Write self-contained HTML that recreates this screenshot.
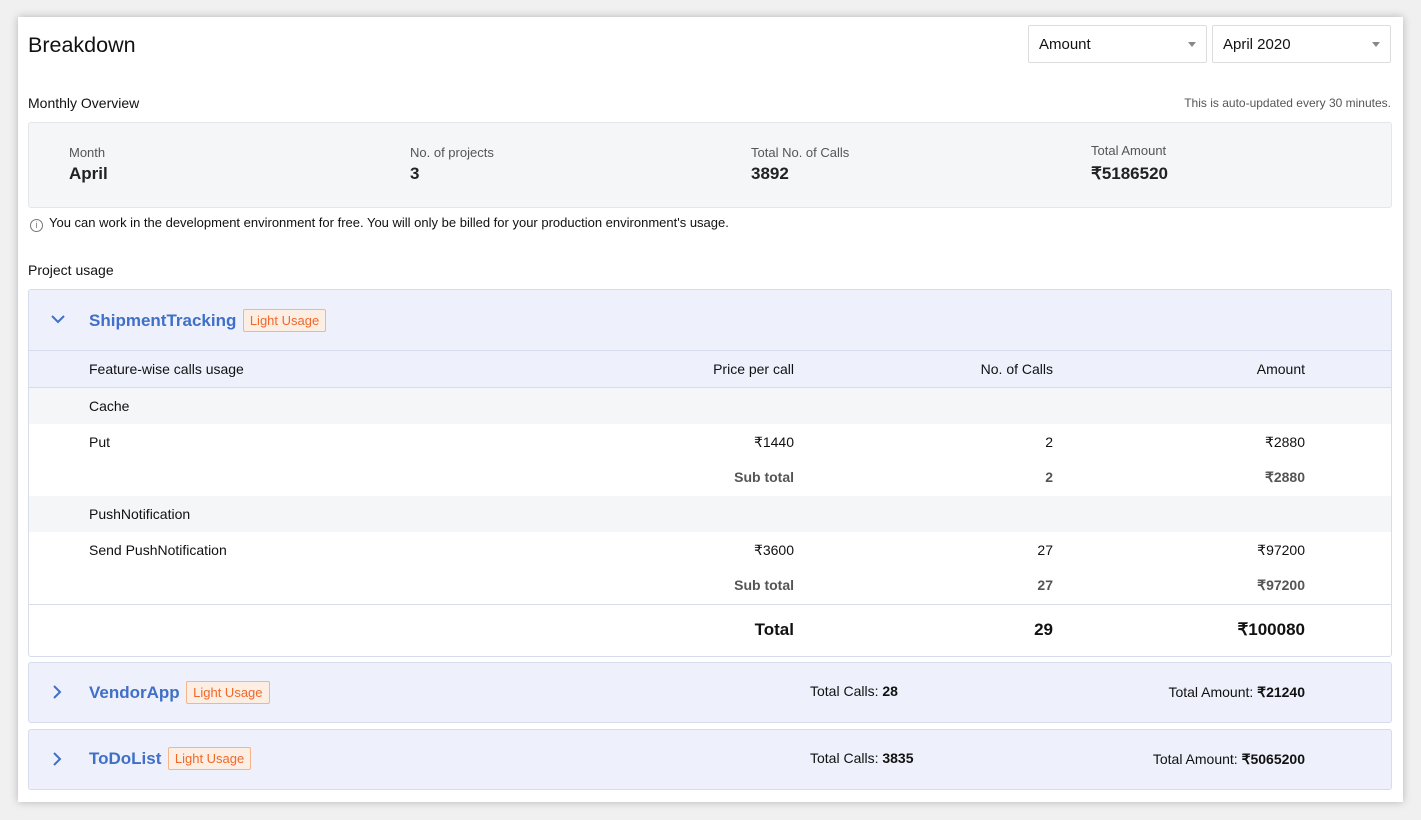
<!DOCTYPE html>
<html><head><meta charset="utf-8"><style>
*{box-sizing:border-box;margin:0;padding:0}
body{width:1421px;height:820px;background:#f0f0f0;font-family:"Liberation Sans",sans-serif;color:#111;position:relative;overflow:hidden}
.card{position:absolute;left:18px;top:17px;width:1385px;height:785px;background:#fff;box-shadow:0 0 8px rgba(0,0,0,.25)}
.a{position:absolute;white-space:nowrap}
.sel{position:absolute;top:25px;height:38px;border:1px solid #ddd;border-radius:2px;background:#fff;font-size:15px;padding:10px 10px}
.sel:after{content:"";position:absolute;right:10px;top:16px;border:4px solid transparent;border-top:5px solid #888}
.ov{position:absolute;left:28px;top:122px;width:1364px;height:86px;background:#f5f6f8;border:1px solid #e3e6ea;border-radius:3px}
.lab{font-size:13px;color:#555}
.val{font-size:17px;font-weight:bold;color:#222}
.proj{position:absolute;left:28px;width:1364px;border:1px solid #d7dcec;border-radius:3px;background:#fff;overflow:hidden}
.row{position:absolute;left:0;width:100%;font-size:14px}
.blue{color:#3f6fc8;font-size:17px;font-weight:bold}
.badge{display:inline-block;border:1px solid #f5b48a;background:#fdeee4;color:#f0682a;font-size:13px;padding:3px 6px;border-radius:2px;vertical-align:1px}
.r{text-align:right}
</style></head><body>
<div class="card"></div>
<div class="a" style="left:28px;top:33px;font-size:21.5px">Breakdown</div>
<div class="sel" style="left:1028px;width:179px">Amount</div>
<div class="sel" style="left:1212px;width:179px">April 2020</div>
<div class="a" style="left:28px;top:95px;font-size:14px">Monthly Overview</div>
<div class="a" style="right:30px;top:96px;font-size:12px;color:#555">This is auto-updated every 30 minutes.</div>
<div class="ov"></div>
<div class="a lab" style="left:69px;top:145px">Month</div><div class="a val" style="left:69px;top:164px">April</div>
<div class="a lab" style="left:410px;top:145px">No. of projects</div><div class="a val" style="left:410px;top:164px">3</div>
<div class="a lab" style="left:751px;top:145px">Total No. of Calls</div><div class="a val" style="left:751px;top:164px">3892</div>
<div class="a lab" style="left:1091px;top:143px">Total Amount</div><div class="a val" style="left:1091px;top:164px">₹5186520</div>
<div class="a" style="left:30px;top:215px;font-size:13px"><span style="display:inline-block;width:13px;height:13px;border:1px solid #777;border-radius:50%;font-size:9px;text-align:center;line-height:11px;color:#777;margin-right:6px;vertical-align:-1px">i</span>You can work in the development environment for free. You will only be billed for your production environment's usage.</div>
<div class="a" style="left:28px;top:262px;font-size:14px">Project usage</div>

<div class="proj" style="top:289px;height:368px">
 <div class="row" style="top:0;height:61px;background:#eef1fb;border-bottom:1px solid #d7dcec"></div>
 <div class="row" style="top:61px;height:37px;background:#eef1fb;border-bottom:1px solid #d7dcec"></div>
 <div class="row" style="top:98px;height:36px;background:#f5f6f8"></div>
 <div class="row" style="top:206px;height:36px;background:#f5f6f8"></div>
 <div class="row" style="top:314px;height:1px;background:#d7dcec"></div>
</div>
<svg class="a" style="left:51px;top:314px" width="14" height="10"><path d="M1 2l6 6 6-6" stroke="#3f6fc8" stroke-width="2" fill="none"/></svg>
<div class="a" style="left:89px;top:309px"><span class="blue">ShipmentTracking</span> <span class="badge" style="margin-left:2px">Light Usage</span></div>
<div class="a" style="left:89px;top:361px;font-size:14px">Feature-wise calls usage</div>
<div class="a r" style="right:627px;top:361px;font-size:14px">Price per call</div>
<div class="a r" style="right:368px;top:361px;font-size:14px">No. of Calls</div>
<div class="a r" style="right:116px;top:361px;font-size:14px">Amount</div>
<div class="a" style="left:89px;top:398px;font-size:14px">Cache</div>
<div class="a" style="left:89px;top:434px;font-size:14px">Put</div>
<div class="a r" style="right:627px;top:434px;font-size:14px">₹1440</div>
<div class="a r" style="right:368px;top:434px;font-size:14px">2</div>
<div class="a r" style="right:116px;top:434px;font-size:14px">₹2880</div>
<div class="a r" style="right:627px;top:469px;font-size:14px;color:#555;font-weight:bold">Sub total</div>
<div class="a r" style="right:368px;top:469px;font-size:14px;color:#555;font-weight:bold">2</div>
<div class="a r" style="right:116px;top:469px;font-size:14px;color:#555;font-weight:bold">₹2880</div>
<div class="a" style="left:89px;top:506px;font-size:14px">PushNotification</div>
<div class="a" style="left:89px;top:542px;font-size:14px">Send PushNotification</div>
<div class="a r" style="right:627px;top:542px;font-size:14px">₹3600</div>
<div class="a r" style="right:368px;top:542px;font-size:14px">27</div>
<div class="a r" style="right:116px;top:542px;font-size:14px">₹97200</div>
<div class="a r" style="right:627px;top:577px;font-size:14px;color:#555;font-weight:bold">Sub total</div>
<div class="a r" style="right:368px;top:577px;font-size:14px;color:#555;font-weight:bold">27</div>
<div class="a r" style="right:116px;top:577px;font-size:14px;color:#555;font-weight:bold">₹97200</div>
<div class="a r" style="right:627px;top:620px;font-size:17px;font-weight:bold">Total</div>
<div class="a r" style="right:368px;top:620px;font-size:17px;font-weight:bold">29</div>
<div class="a r" style="right:116px;top:620px;font-size:17px;font-weight:bold">₹100080</div>

<div class="proj" style="top:662px;height:61px;background:#eef1fb"></div>
<svg class="a" style="left:52px;top:685px" width="10" height="14"><path d="M2 1l6 6-6 6" stroke="#3f6fc8" stroke-width="2" fill="none"/></svg>
<div class="a" style="left:89px;top:681px"><span class="blue">VendorApp</span> <span class="badge" style="margin-left:2px">Light Usage</span></div>
<div class="a" style="left:810px;top:683px;font-size:14px">Total Calls: <b>28</b></div>
<div class="a r" style="right:116px;top:684px;font-size:14px">Total Amount: <b>₹21240</b></div>

<div class="proj" style="top:729px;height:61px;background:#eef1fb"></div>
<svg class="a" style="left:52px;top:752px" width="10" height="14"><path d="M2 1l6 6-6 6" stroke="#3f6fc8" stroke-width="2" fill="none"/></svg>
<div class="a" style="left:89px;top:747px"><span class="blue">ToDoList</span> <span class="badge" style="margin-left:2px">Light Usage</span></div>
<div class="a" style="left:810px;top:750px;font-size:14px">Total Calls: <b>3835</b></div>
<div class="a r" style="right:116px;top:751px;font-size:14px">Total Amount: <b>₹5065200</b></div>
</body></html>
